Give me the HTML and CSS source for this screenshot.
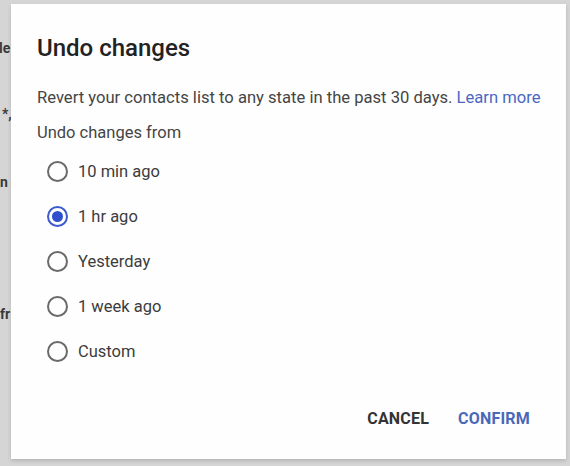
FILE: index.html
```html
<!DOCTYPE html>
<html>
<head>
<meta charset="utf-8">
<link rel="stylesheet" href="styles.css">
</head>
<body>
<div class="page">
  <div class="bg-line l1">le</div>
  <div class="bg-line l2">*,</div>
  <div class="bg-line l3">n c</div>
  <div class="bg-line l4">fr</div>
</div>
<div class="dialog">
  <h1 class="title">Undo changes</h1>
  <p class="desc">Revert your contacts list to any state in the past 30 days. <a class="link">Learn more</a></p>
  <p class="sub">Undo changes from</p>
  <div class="options">
    <label class="opt"><span class="radio"></span><span class="lbl">10 min ago</span></label>
    <label class="opt"><span class="radio on"></span><span class="lbl">1 hr ago</span></label>
    <label class="opt"><span class="radio"></span><span class="lbl">Yesterday</span></label>
    <label class="opt"><span class="radio"></span><span class="lbl">1 week ago</span></label>
    <label class="opt"><span class="radio"></span><span class="lbl">Custom</span></label>
  </div>
  <div class="actions">
    <button class="btn cancel">CANCEL</button>
    <button class="btn confirm">CONFIRM</button>
  </div>
</div>
</body>
</html>
```
FILE: styles.css
```css
html, body {
  margin: 0;
  padding: 0;
  width: 570px;
  height: 466px;
  overflow: hidden;
  background: #d5d5d5;
  font-family: Roboto, "Liberation Sans", sans-serif;
}
.page {
  position: relative;
  height: 466px;
}
.bg-line {
  position: absolute;
  left: -1px;
  font-size: 14px;
  font-weight: 700;
  color: #3a3a3a;
}
.l1 { top: 40px; }
.l2 { top: 106px; left: 2px; }
.l3 { top: 174px; left: 0; }
.l4 { top: 306px; left: 0; }
.dialog {
  position: absolute;
  left: 11px;
  top: 4px;
  width: 555px;
  height: 455px;
  background: #fefefe;
  box-shadow: 0 2px 4px rgba(0,0,0,0.15);
  box-sizing: border-box;
  padding: 30px 26px 0 26px;
  display: flex;
  flex-direction: column;
}
.title {
  margin: 0;
  font-size: 24px;
  font-weight: 500;
  color: #222;
  line-height: 28px;
}
.desc {
  margin: 25px 0 0 0;
  font-size: 16.6px;
  color: #454545;
  line-height: 22px;
  white-space: nowrap;
}
.link { color: #4a68c4; }
.sub {
  margin: 13px 0 0 0;
  font-size: 16.5px;
  color: #454545;
  line-height: 22px;
}
.options {
  display: flex;
  flex-direction: column;
  margin-top: 5px;
}
.opt {
  display: flex;
  align-items: center;
  height: 45px;
  gap: 10px;
  padding-left: 10px;
}
.radio {
  width: 17px;
  height: 17px;
  border: 2px solid #6a6a6a;
  border-radius: 50%;
  box-sizing: content-box;
  position: relative;
  flex: none;
}
.radio.on { border-color: #3d5bd0; }
.radio.on::after {
  content: "";
  position: absolute;
  left: 3px;
  top: 3px;
  width: 11px;
  height: 11px;
  border-radius: 50%;
  background: #2f4fcf;
}
.lbl {
  font-size: 16.5px;
  color: #3c3c3c;
}
.actions {
  display: flex;
  justify-content: flex-end;
  gap: 9px;
  margin-top: 26px;
}
.btn {
  background: none;
  border: none;
  font-family: inherit;
  font-size: 16px;
  font-weight: 700;
  letter-spacing: 0.2px;
  padding: 0 10px;
  height: 36px;
  cursor: pointer;
}
.cancel { color: #333; }
.confirm { color: #4a68b8; }
```
